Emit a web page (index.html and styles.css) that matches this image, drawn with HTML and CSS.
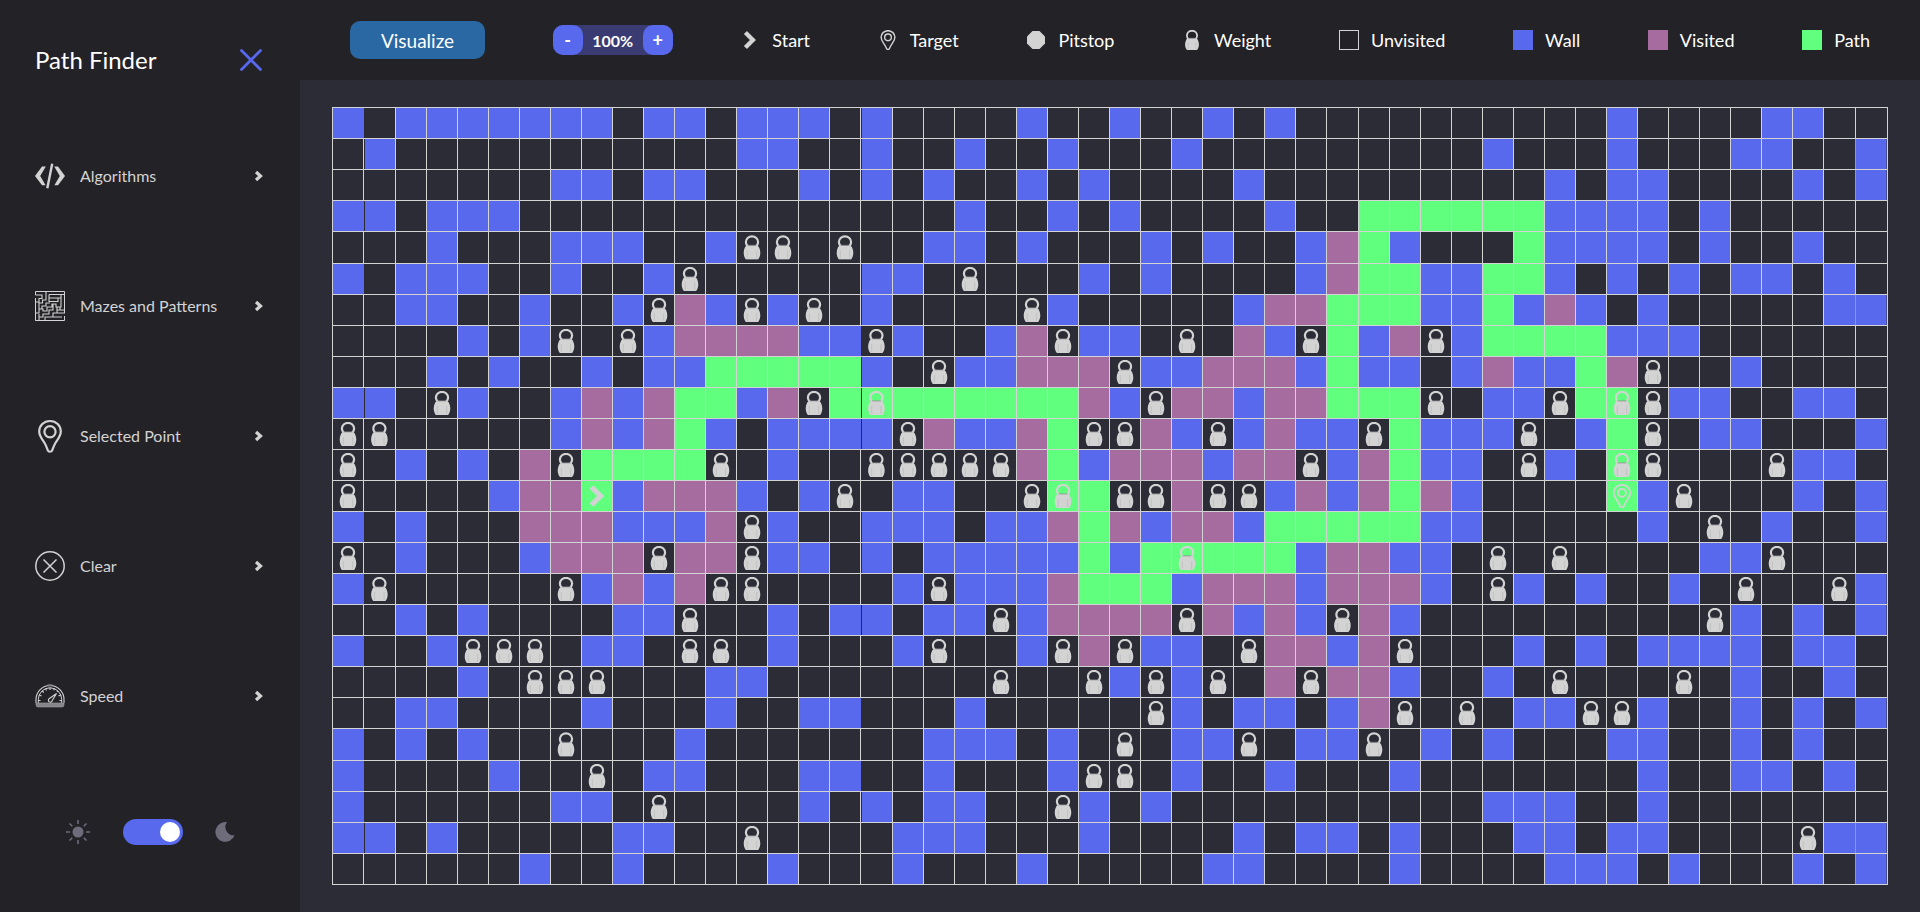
FILE: index.html
```html
<!DOCTYPE html>
<html lang="en">
<head>
<meta charset="utf-8">
<meta name="viewport" content="width=device-width, initial-scale=1">
<title>Path Finder</title>
<link rel="stylesheet" href="styles.css">
</head>
<body>
<svg class="sprite" aria-hidden="true">
  <symbol id="weight" viewBox="0 0 24 24">
    <ellipse cx="12" cy="6.600" rx="6.100" ry="5.700" fill="none" stroke="#d3d3d3" stroke-width="2.200"/>
    <path d="M7.400 10h9.200c1.200 0 1.900 1 2.500 2.200.8 1.600 1.200 3.300 1.200 5.200 0 2.500-.8 4.800-2.200 6.600H5.900c-1.400-1.800-2.200-4.100-2.200-6.600 0-1.900.4-3.600 1.200-5.200.6-1.200 1.300-2.200 2.500-2.200z" fill="#d3d3d3"/>
    <path d="M7.500 9.900h9" stroke="#8d8d90" stroke-width=".8" fill="none"/>
    <path d="M7.300 15v8M16.700 15v8" stroke="#bcbcbc" stroke-width=".8" fill="none"/>
  </symbol>
  <symbol id="start" viewBox="0 0 24 24">
    <path d="M6.500 3l9 9-9 9" fill="none" stroke="#d3d3d3" stroke-width="5.200"/>
  </symbol>
  <symbol id="target" viewBox="0 0 24 24">
    <g fill="none" stroke="#d3d3d3" stroke-width="1.700">
      <path d="M12 .8c-4.700 0-8.300 3.600-8.300 8 0 3.500 2.200 6 4.100 8.800 1.300 2 1.900 3.700 2.700 5 .7 1.100 2.300 1.100 3 0 .8-1.300 1.400-3 2.700-5 1.900-2.800 4.100-5.300 4.100-8.800 0-4.400-3.600-8-8.300-8z"/>
      <circle cx="12" cy="8.800" r="4"/>
    </g>
  </symbol>
  <symbol id="chevron" viewBox="0 0 10 12">
    <path d="M2 2l4.500 4L2 10" fill="none" stroke="#d3d3d3" stroke-width="3.200"/>
  </symbol>
</svg>

<div class="app">
  <aside class="sidebar">
    <div class="brand">
      <h1 class="brand-name">Path Finder</h1>
      <button class="icon-button" type="button" aria-label="Close menu">
        <svg width="22" height="22" viewBox="0 0 22 22"><path d="M1.500 1.500l19 19M20.500 1.500l-19 19" stroke="#5768ee" stroke-width="2.800" stroke-linecap="round"/></svg>
      </button>
    </div>
    <nav class="menu">
      <button class="menu-item" type="button">
        <svg class="menu-icon" viewBox="0 0 30 30"><path d="M7 5.500h3.800L5.200 15l5.400 9.300H7L0 15zM23 5.500h-3.800l5.600 9.500-5.400 9.300H23L30 15z" fill="#d3d3d3"/><path d="M17.200 2.800L12.300 27.200" stroke="#d3d3d3" stroke-width="2.400"/></svg>
        <span class="menu-label">Algorithms</span>
        <svg class="menu-arrow"><use href="#chevron"/></svg>
      </button>
      <button class="menu-item" type="button">
        <svg class="menu-icon" viewBox="0 0 30 30" fill="none" stroke="#d3d3d3"><path d="M.5 4V.5h29v22M29.500 25v4.500H.5V7M.5 29.500V25"/><path stroke-width="1.100" d="M.5 4H7v3.500H4V11H.5M4 0v1M11 0v9H7.500v3H4v6h3v-3h4v-3h4M14 3.500h15M14 3.500V7h9v3.500h-9V7M26 4v3h-3M26 7v9h-5v-3h-4v3h-5v4H8v-2H4v4H.5M18 13v6h-4v4H8v3H4v-3M29.500 19H22v-3M22 19v3h-4v4h-8v3M22 22h7M25 16v3M14 26h13M4 26v3"/></svg>
        <span class="menu-label">Mazes and Patterns</span>
        <svg class="menu-arrow"><use href="#chevron"/></svg>
      </button>
      <button class="menu-item" type="button">
        <svg class="menu-icon" viewBox="0 0 30 30" overflow="visible" fill="none" stroke="#d3d3d3" stroke-width="2.200"><path d="M15 0C8.800 0 4.200 4.700 4.200 10.600c0 4.600 3.200 8 5.400 11.400 1.500 2.500 2.300 5 3.200 7.400.7 1.800 3.700 1.800 4.400 0 .9-2.400 1.700-4.900 3.200-7.400 2.200-3.400 5.400-6.800 5.400-11.400C25.800 4.700 21.200 0 15 0z"/><circle cx="15" cy="10.800" r="5.600"/></svg>
        <span class="menu-label">Selected Point</span>
        <svg class="menu-arrow"><use href="#chevron"/></svg>
      </button>
      <button class="menu-item" type="button">
        <svg class="menu-icon" viewBox="0 0 30 30" fill="none" stroke="#d3d3d3" stroke-width="1.500"><circle cx="15" cy="15" r="14.200"/><path d="M8.500 8.500l13 13M21.500 8.500l-13 13"/></svg>
        <span class="menu-label">Clear</span>
        <svg class="menu-arrow"><use href="#chevron"/></svg>
      </button>
      <button class="menu-item" type="button">
        <svg class="menu-icon" viewBox="0 0 30 30" fill="none" stroke="#d3d3d3"><path d="M1 22v-3.500a14 14 0 0 1 28 0V22" stroke-width="1.100"/><path d="M3.300 22v-3.500a11.700 11.700 0 0 1 23.400 0V22" stroke-width="1"/><path d="M3 19.500h2.500M24.500 19.500H27M4.300 14l2.200 1M25.700 14l-2.200 1M7 9.800l1.800 1.700M10.500 7.500l1 2M15 6.500V9M19.500 7.500l-.8 1.800M23 9.800l-1 1" stroke-width="1.100"/><path d="M1 22h28v2a2 2 0 0 1-2 2H3a2 2 0 0 1-2-2z" fill="#85858a" stroke="#9c9ca0" stroke-width=".6"/><path d="M21.500 12.500l-4.400 7.300a1.900 1.900 0 1 1-3-2z" stroke-width="1.100"/><path d="M12.500 4.600a14 14 0 0 1 5 0" stroke="#85858a" stroke-width="2"/></svg>
        <span class="menu-label">Speed</span>
        <svg class="menu-arrow"><use href="#chevron"/></svg>
      </button>
    </nav>
    <div class="theme">
      <svg width="26" height="26" viewBox="0 0 26 26" aria-hidden="true"><circle cx="13" cy="13" r="5.500" fill="#6e6c7a"/><path d="M13 1v4M13 21v4M1 13h4M21 13h4M4.500 4.500l2.800 2.800M18.700 18.700l2.800 2.800M4.500 21.500l2.800-2.800M18.700 7.300l2.800-2.800" stroke="#6e6c7a" stroke-width="1.600"/></svg>
      <input class="switch" type="checkbox" role="switch" aria-label="Dark theme" checked>
      <svg width="20" height="20" viewBox="0 0 20 20" aria-hidden="true"><path d="M12 .2A9.900 9.900 0 1 0 19.600 13.300 8.300 8.300 0 0 1 12 .2z" fill="#6e6c7a"/></svg>
    </div>
  </aside>

  <div class="content">
    <header class="toolbar">
      <button class="visualize" type="button">Visualize</button>
      <div class="zoom">
        <button class="zoom-button" type="button" aria-label="Zoom out">-</button>
        <output class="zoom-value">100%</output>
        <button class="zoom-button" type="button" aria-label="Zoom in">+</button>
      </div>
      <div class="legend"><svg class="legend-icon"><use href="#start"/></svg>Start</div>
      <div class="legend"><svg class="legend-icon"><use href="#target"/></svg>Target</div>
      <div class="legend"><svg class="legend-icon" viewBox="0 0 20 20"><path d="M6.500 1h7L19 6.500v7L13.500 19h-7L1 13.500v-7z" fill="#d3d3d3"/></svg>Pitstop</div>
      <div class="legend"><svg class="legend-icon"><use href="#weight"/></svg>Weight</div>
      <div class="legend"><span class="swatch swatch-unvisited"></span>Unvisited</div>
      <div class="legend"><span class="swatch swatch-wall"></span>Wall</div>
      <div class="legend"><span class="swatch swatch-visited"></span>Visited</div>
      <div class="legend"><span class="swatch swatch-path"></span>Path</div>
    </header>
    <main class="stage">
      <div class="board" id="board"></div>
    </main>
  </div>
</div>
<script src="board.js"></script>
</body>
</html>
```
FILE: styles.css
```css
:root {
  --panel: #232227;
  --stage: #2c2c37;
  --line: #d3d3d3;
  --wall: #5869ee;
  --visited: #a76c9f;
  --path: #61ff7e;
}

* { box-sizing: border-box; }

body {
  margin: 0;
  background: var(--stage);
  color: #fff;
  font-family: Lato, "Open Sans", sans-serif;
  font-size: 18px;
}

button {
  margin: 0;
  padding: 0;
  border: 0;
  background: none;
  color: inherit;
  font: inherit;
  cursor: pointer;
}

svg { display: block; }
.sprite { position: absolute; width: 0; height: 0; }

.app { display: flex; min-height: 100vh; }

.sidebar {
  flex: 0 0 300px;
  background: var(--panel);
}

.brand {
  display: flex;
  align-items: center;
  justify-content: space-between;
  padding: 45px 38px 36px 35px;
}

.brand-name {
  margin: 0;
  font-size: 24px;
  font-weight: 400;
  line-height: 30px;
}

.menu { display: flex; flex-direction: column; }

.menu-item {
  display: flex;
  align-items: center;
  gap: 15px;
  height: 130px;
  padding: 0 36px 0 35px;
  color: #d3d3d3;
  font-size: 16px;
  text-align: left;
}

.menu-icon { width: 30px; height: 30px; }
.menu-label { flex: 1; line-height: 20px; }
.menu-arrow { width: 10px; height: 12px; }

.theme {
  display: flex;
  align-items: center;
  justify-content: center;
  gap: 32px;
  padding: 58px 0;
}

.switch {
  appearance: none;
  width: 60px;
  height: 26px;
  margin: 0;
  padding: 3px;
  display: flex;
  justify-content: flex-end;
  border-radius: 13px;
  background: var(--wall);
}

.switch::before {
  content: "";
  width: 20px;
  height: 20px;
  border-radius: 50%;
  background: #fff;
}

.content { flex: 1; min-width: 0; }

.toolbar {
  display: flex;
  align-items: center;
  justify-content: space-between;
  height: 80px;
  padding: 0 50px;
  background: var(--panel);
}

.visualize {
  width: 135px;
  height: 38px;
  border-radius: 10px;
  background: #2968a3;
  font-size: 19px;
}

.zoom {
  display: flex;
  align-items: center;
  width: 120px;
  height: 30px;
  border-radius: 10px;
  background: #393b72;
}

.zoom-button {
  width: 30px;
  height: 30px;
  border-radius: 10px;
  background: var(--wall);
  font-weight: 700;
}

.zoom-value {
  flex: 1;
  font-size: 16px;
  font-weight: 700;
  text-align: center;
}

.legend {
  display: flex;
  align-items: center;
  gap: 12px;
}

.legend-icon { width: 20px; height: 20px; overflow: visible; }
.swatch { width: 20px; height: 20px; }
.swatch-unvisited { border: 1px solid var(--line); }
.swatch-wall { background: var(--wall); }
.swatch-visited { background: var(--visited); }
.swatch-path { background: var(--path); }

.stage { padding: 27px 32px; }

.board {
  display: grid;
  grid-template-columns: 30fr 31fr repeat(15, 30fr) 31fr repeat(14, 30fr) 31fr repeat(15, 30fr) 31fr 31fr;
  grid-template-rows: repeat(4, 30fr) 31fr repeat(15, 30fr) 31fr repeat(4, 30fr);
  gap: 1px;
  padding: 1px;
  aspect-ratio: 2 / 1;
  background: var(--line);
}

.cell {
  display: flex;
  align-items: center;
  justify-content: center;
  min-width: 0;
  min-height: 0;
  background: var(--stage);
}

.cell svg { width: 80%; height: 80%; }
.wall { --fill: var(--wall); background: var(--wall); }
.visited { --fill: var(--visited); background: var(--visited); }
.path { --fill: var(--path); background: var(--path); }

.filled:nth-child(50n + 1),
.filled:nth-child(50n + 17) { box-shadow: 1px 0 var(--fill); }

.filled:nth-child(50n + 2),
.filled:nth-child(50n + 18) { box-shadow: inset 1px 0 var(--stage); }

.wall:nth-child(50n) { box-shadow: inset -1px 0 #464b9c, -1px 0 #8791f0; }
```
FILE: board.js
```js
// "." unvisited, "#" wall, "v" visited, "p" path, "w" weight,
// "W" weight on the path, "S" start, "T" target
const rows = [
  "#.#######.##." + "###.#....#.." + "#..#.#......" + "....#....##..",
  ".#..........." + "##..#..#..#." + "..#........." + "#...#...##..#",
  ".......##.##." + "..#.#.#..#.#" + "....#......." + "..#.##....#.#",
  "##.###......." + ".......#..#." + "#....#..pppp" + "pp####.#.....",
  "...#...###..#" + "ww.w..##.#.." + ".#.#..#vp#.." + ".p####.#..#..",
  "#.###..#..#w." + "....##.w...#" + ".#....#vpp##" + "pp#.#.#.##.#.",
  "..##..#..#wv#" + "w#w.#....w#." + "....#vvppp##" + "p#v#.#.....##",
  "....#.#w.w#vv" + "vv##w#..#vw#" + "#.w.v#wp#vw#" + "pppp###......",
  "...#.#..#.##p" + "pppp#.w##vvv" + "w##vvv#p##.#" + "v##pvw..#....",
  "##.w#..#v#vpp" + "#vwpWppppppv" + "#wvv#vvpppw." + "##wpWw##..##.",
  "ww.....#v#vp#" + ".####wv##vpw" + "wv#w#v##wp##" + "#w.#pw.##...#",
  "w.#.#.vwppppw" + ".#..wwwwwvp#" + "vvv#vvw#vp##" + ".w#.Ww...w##.",
  "w....#vvS#vvv" + "#.#w.##..wWp" + "wwvww#v#vpv#" + "....T#w...#.#",
  "#.#...vvv###v" + "w#..###.##vp" + "v#vv#ppppp##" + ".....#.w.#..#",
  "w.#...#vvvwvv" + "w##.#.#####p" + "#pWppp#vv##." + "w.w....##w...",
  "#w.....w#v#vw" + "w....#w###vp" + "pp#vvv#vvv#." + "w#.#..#.w..w#",
  "..#.#....##w." + ".#.##.##w#vv" + "vvwv#v#wv#.." + ".......w#.#.#",
  "#..#www.##.ww" + ".#...#w..#wv" + "w##.wvv#vw.." + ".#.#.####.##.",
  "....#.www...#" + "#.......w..w" + "#w#w.vwvv#.." + "#.w...w.#..#.",
  "..##....#...#" + "..##...#...." + ".w#.##.#vw.w" + ".##ww#..#.#.#",
  "#.#.#..w...#." + "......###.#." + "w.##w.##w.#." + "#...##..#.#..",
  "#....#..w.##." + "..##..#...#w" + "w.#..#...#.." + ".....#..##.#.",
  "#......##.w.." + "..#.#.##..w#" + ".#.........." + "###..#.......",
  "##.#.....##.." + "w....###...#" + "....#.##.#.." + ".##.##....w##",
  "......#..#..." + ".#...#...#.." + "...##....#.." + "..###.#...#.#"
];

const fills = { "#": "wall", v: "visited", p: "path", W: "path", S: "path", T: "path" };
const icons = { w: "weight", W: "weight", S: "start", T: "target" };

document.getElementById("board").innerHTML = rows.join("").split("").map(code => {
  const fill = fills[code] ? " filled " + fills[code] : "";
  const icon = icons[code] ? `<svg><use href="#${icons[code]}"/></svg>` : "";
  return `<div class="cell${fill}">${icon}</div>`;
}).join("");
```
